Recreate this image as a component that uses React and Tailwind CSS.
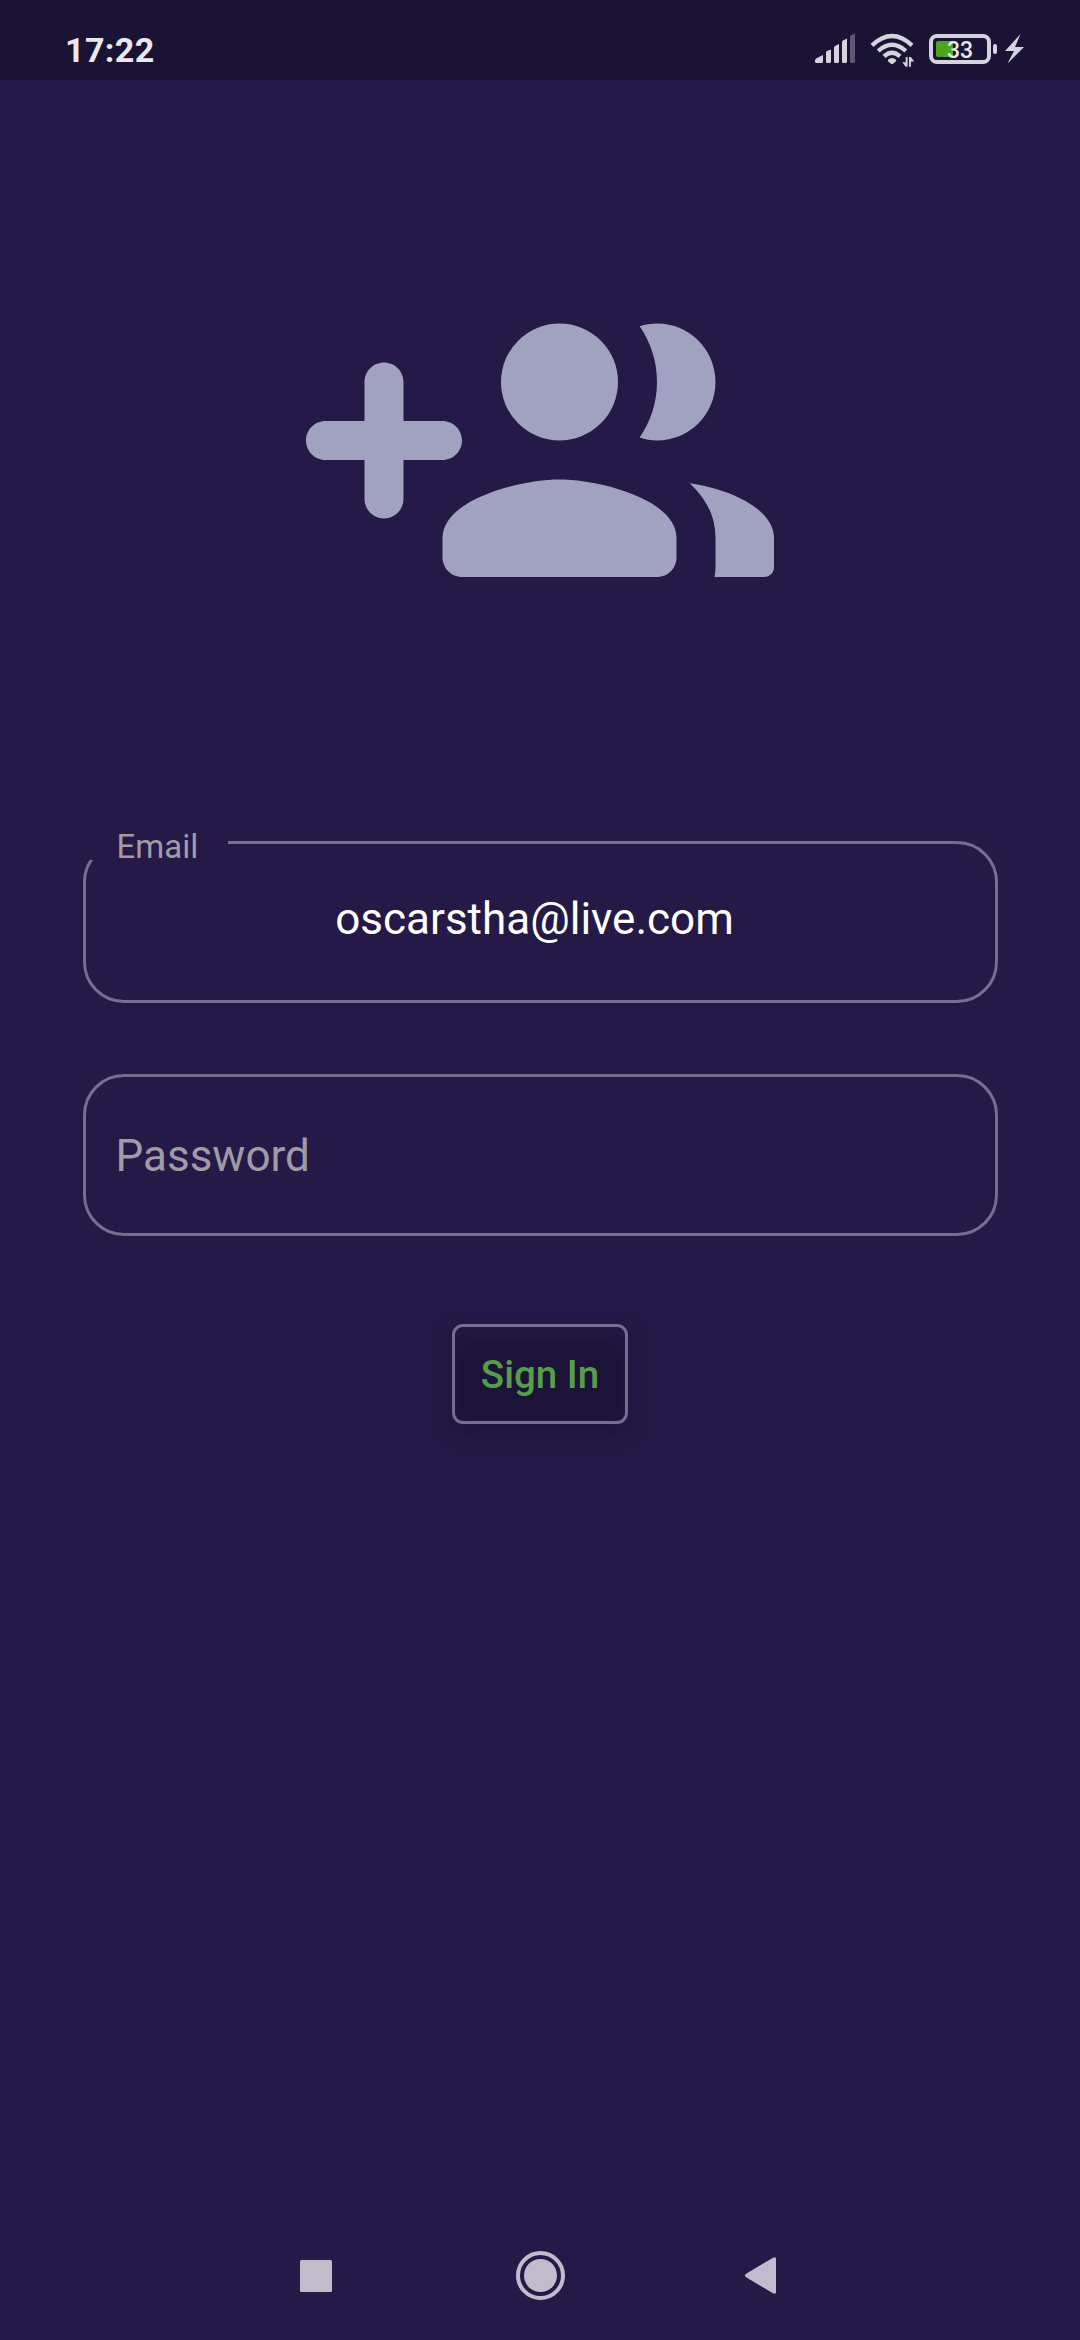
function StatusBar() {
  return (
    <header className="flex h-20 shrink-0 justify-between bg-[#1b1333]">
      <span className="ml-[65px] mt-[27px] text-[34px] leading-[46px] font-bold tracking-[0.4px] text-[#eae8ee]">17:22</span>
      <svg className="mr-10 mt-5" width="240" height="60" viewBox="0 0 240 60" fill="#d6d3de">
        <path d="M15 20.5q0-1.5 1.5-2.3L23 15v6.5q0 1.5-1.5 1.5h-5q-1.5 0-1.5-1.5zM26 12.5q0-1 1-1.4L31 9.5v12q0 1.5-1.5 1.5h-2q-1.5 0-1.5-1.5zM34 7.500q0-1 1-1.500l4-2v17.500q0 1.500-1.500 1.500h-2q-1.500 0-1.500-1.500zM42 2q0-1 1-1.500L47-1.500v23q0 1.500-1.500 1.500h-2q-1.500 0-1.500-1.500z" transform="translate(0 20)" />
        <path d="M50 17q0-1.500 1.500-2l3.500-1.500v28q0 1.500-1.500 1.500h-2q-1.500 0-1.500-1.500z" opacity=".36" />
        <g fill="none" stroke="#d6d3de" strokeWidth="4.300">
          <path d="M72 25.300q20-18.500 40 0" />
          <path d="M78.200 31q13.800-12.300 27.600 0" />
          <path d="M84 36.300q8-7.200 16 0" />
        </g>
        <path d="M88 39.800q4-3.400 8 0q.5 1-.5 2l-2.200 1.800q-1.300 1-2.600 0L88.500 41.800q-1-1-.5-2z" />
        <path d="M105.700 37h1.900v9.700h-1.900l-3.400-4.400h3.400zM109 37h1.900l3.300 4.400h-3.300v5.300H109z" />
        <rect x="131" y="16" width="58" height="26" rx="6" fill="none" stroke="#d6d3de" strokeWidth="4" />
        <path d="M138 21h15v16h-15q-2 0-2-2V23q0-2 2-2z" fill="#4ca51b" />
        <rect x="193" y="24" width="4" height="10" rx="2" />
        <path d="M220.500 14L205 31h9l-6.500 12.500L224 27h-9z" />
        <text x="160" y="38.300" textAnchor="middle" fontFamily="Roboto, sans-serif" fontSize="23" fontWeight="500" fill="#eae8ee">33</text>
      </svg>
    </header>
  );
}

function GroupAddIcon() {
  return (
    <svg className="mt-[146px] size-[468px] shrink-0" viewBox="0 0 24 24" fill="#a1a2bf">
      <path d="M8 11c0-.55-.45-1-1-1H5V8c0-.55-.45-1-1-1s-1 .45-1 1v2H1c-.55 0-1 .45-1 1s.45 1 1 1h2v2c0 .55.45 1 1 1s1-.45 1-1v-2h2c.55 0 1-.45 1-1z" />
      <circle cx="13" cy="8" r="3" />
      <path d="M18 11c1.660 0 3-1.340 3-3s-1.340-3-3-3c-.31 0-.61.05-.89.140.56.810.89 1.790.89 2.860s-.34 2.040-.89 2.850c.28.100.58.150.89.150z" />
      <path d="M13 13c-2 0-6 1-6 3v1c0 .55.45 1 1 1h10c.55 0 1-.45 1-1v-1c0-2-4-3-6-3z" />
      <path d="M19.670 13.190c.79.740 1.330 1.630 1.330 2.810v1.500c0 .17-.02.340-.05.500h2.550c.28 0 .5-.22.5-.5V16c0-1.450-2.120-2.490-4.330-2.810z" />
    </svg>
  );
}

function NavBar() {
  return (
    <nav className="mt-auto grid h-[129px] shrink-0 grid-cols-[300px_32px_184px_49px_180px_31px] items-center fill-[#c0bccb]">
      <svg className="col-start-2" width="32" height="32"><rect width="32" height="32" rx="1.500" /></svg>
      <svg className="col-start-4" width="49" height="49" viewBox="0 0 49 49">
        <circle cx="24.500" cy="24.500" r="22.500" fill="none" stroke="#c0bccb" strokeWidth="4" />
        <circle cx="24.500" cy="24.500" r="16.500" />
      </svg>
      <svg className="col-start-6" width="31" height="37" viewBox="0 0 31 37">
        <path d="M.7 17L28 .7Q31-.6 31 2v33q0 2.600-3 1.300L.7 20q-1.400-1.500 0-3z" />
      </svg>
    </nav>
  );
}

export default function App() {
  return (
    <main className="flex h-[2340px] w-[1080px] flex-col overflow-hidden bg-[#251947] font-['Roboto',sans-serif]">
      <StatusBar />
      <div className="flex flex-col items-center">
        <GroupAddIcon />
        <label className="relative mt-[147px] flex h-[162px] w-[915px] items-center rounded-[41px] border-[3px] border-[#766f92]">
          <span className="absolute -top-[5px] left-0 h-[21px] w-[142px] bg-[#251947]" />
          <span className="absolute -top-[17px] left-[31px] text-[33px] leading-[40px] text-[#a09ca5]">Email</span>
          <span className="w-full pr-[11px] pb-[6px] text-center text-[44px] leading-[52px] text-white">oscarstha@live.com</span>
        </label>
        <label className="mt-[71px] flex h-[162px] w-[915px] items-center rounded-[41px] border-[3px] border-[#766f92] pt-[2px] pl-[30px] text-[44px] leading-[52px] text-[#a09ca5]">
          Password
        </label>
        <button className="relative mt-[88px] flex h-[100px] w-[176px] items-center justify-center">
          <span className="absolute inset-x-0 top-[9px] -bottom-[7px] rounded-[11px] bg-[#1c1339] blur-[10px]" />
          <span className="absolute inset-0 rounded-[11px] border-[3px] border-[#766f92]" />
          <span className="relative pt-px text-[38.5px] leading-[46px] font-medium text-[#579e48]">Sign In</span>
        </button>
      </div>
      <NavBar />
    </main>
  );
}
